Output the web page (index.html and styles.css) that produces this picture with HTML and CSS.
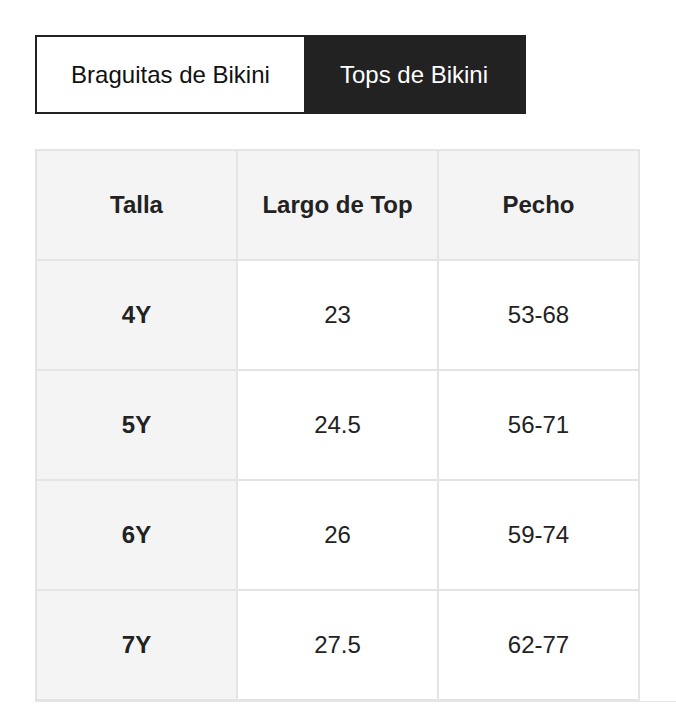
FILE: index.html
```html
<!DOCTYPE html>
<html lang="es">
<head>
<meta charset="utf-8">
<link rel="stylesheet" href="styles.css">
</head>
<body>
<div class="page">
  <div class="tabs">
    <div class="tab tab-first">Braguitas de Bikini</div>
    <div class="tab tab-active">Tops de Bikini</div>
  </div>
  <div class="table-wrap">
    <table class="size-table">
      <thead>
        <tr><th>Talla</th><th>Largo de Top</th><th>Pecho</th></tr>
      </thead>
      <tbody>
        <tr><th>4Y</th><td>23</td><td>53-68</td></tr>
        <tr><th>5Y</th><td>24.5</td><td>56-71</td></tr>
        <tr><th>6Y</th><td>26</td><td>59-74</td></tr>
        <tr><th>7Y</th><td>27.5</td><td>62-77</td></tr>
      </tbody>
    </table>
  </div>
</div>
</body>
</html>
```

FILE: styles.css
```css
html, body {
  margin: 0;
  padding: 0;
  background: #ffffff;
}
body {
  font-family: "Liberation Sans", Arial, sans-serif;
  color: #222222;
}
.page {
  padding: 35px 0 0 35px;
}
.tabs {
  display: flex;
  width: max-content;
  border: 2px solid #222222;
  height: 75px;
}
.tab {
  display: flex;
  align-items: center;
  justify-content: center;
  font-size: 24px;
}
.tab-first {
  width: 267px;
  background: #ffffff;
  color: #111111;
}
.tab-active {
  width: 220px;
  background: #222222;
  color: #ffffff;
}
.table-wrap {
  margin-top: 35px;
  border-bottom: 1px solid #e6e6e6;
}
.size-table {
  border-collapse: separate;
  border-spacing: 0;
  border-top: 2px solid #e4e4e4;
  border-left: 2px solid #e4e4e4;
}
.size-table th,
.size-table td {
  border-right: 2px solid #e4e4e4;
  border-bottom: 2px solid #e4e4e4;
  width: 199px;
  height: 108px;
  padding: 0;
  text-align: center;
  vertical-align: middle;
  font-size: 24px;
  color: #222222;
}
.size-table th {
  font-weight: bold;
  background: #f4f4f4;
}
.size-table td {
  font-weight: normal;
  background: #ffffff;
}
```
